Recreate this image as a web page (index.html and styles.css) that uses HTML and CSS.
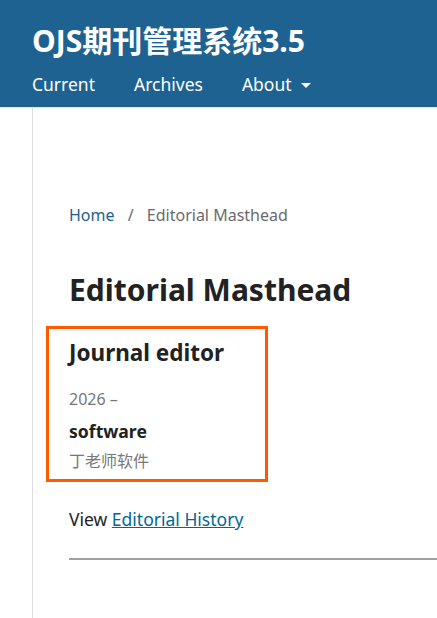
FILE: index.html
```html
<!DOCTYPE html>
<html>
	<head>
		<meta charset="utf-8" />
		<title>Editorial Masthead | OJS期刊管理系统3.5</title>
		<link rel="stylesheet" href="styles.css">
	</head>
	<body>
		<header class="site-head">
			<div class="brand">OJS期刊管理系统3.5</div>
			<nav>
				<ul class="menu">
					<li><a href="#">Current</a></li>
					<li><a href="#">Archives</a></li>
					<li><a href="#" class="dropdown">About</a></li>
				</ul>
			</nav>
		</header>
		<main class="page">
			<div class="breadcrumbs">
				<a href="#">Home</a>
				<span class="sep">/</span>
				<span class="current">Editorial Masthead</span>
			</div>
			<h1>Editorial Masthead</h1>
			<section class="role">
				<h2>Journal editor</h2>
				<div class="since">2026 –</div>
				<div class="person">software</div>
				<div class="affiliation">丁老师软件</div>
			</section>
			<p class="history">View <a href="#">Editorial History</a></p>
			<hr>
		</main>
	</body>
</html>
```

FILE: styles.css
```css
body {
	margin: 0;
	font-family: 'Noto Sans', 'Noto Sans CJK SC', sans-serif;
	color: #222;
	background: #fff;
	overflow: hidden;
}
a {
	color: #1e6292;
	text-decoration: none;
}

/* header */
.site-head {
	background: #1e6292;
	height: 107px;
	padding: 0 32px;
	border-bottom: 1px solid #e4e8ec;
	box-sizing: content-box;
}
.brand {
	padding-top: 23px;
	font-size: 30px;
	font-weight: bold;
	line-height: 36px;
	color: #fff;
}
.menu {
	display: flex;
	gap: 39px;
	list-style: none;
	margin: 13px 0 0;
	padding: 0;
	font-size: 17.5px;
	line-height: 24px;
}
.menu a {
	color: #fff;
}
.dropdown::after {
	content: '';
	display: inline-block;
	margin-left: 9px;
	vertical-align: 3px;
	border-top: 5px solid #fff;
	border-left: 5px solid transparent;
	border-right: 5px solid transparent;
}

/* content */
.page {
	margin-left: 32px;
	border-left: 1px solid #ddd;
	padding-left: 36px;
	min-height: 520px;
	overflow: hidden;
}
.breadcrumbs {
	margin-top: 95px;
	font-size: 16px;
	line-height: 24px;
	color: #6b6b6b;
}
.breadcrumbs .sep {
	margin: 0 9px;
}
h1 {
	margin: 43px 0 0;
	font-size: 30px;
	line-height: 40px;
}
.role {
	margin: 16px 0 0 -23px;
	width: 176px;
	padding: 10px 20px 6px;
	border: 3px solid #ff5a00;
}
.role h2 {
	margin: 0;
	font-size: 22.5px;
	line-height: 28px;
}
.since {
	margin-top: 20px;
	font-size: 16px;
	line-height: 24px;
	color: #777;
}
.person {
	margin-top: 8px;
	font-size: 17.6px;
	font-weight: bold;
	line-height: 24px;
}
.affiliation {
	margin-top: 6px;
	font-size: 16px;
	line-height: 24px;
	color: #777;
}
.history {
	margin: 25px 0 0;
	font-size: 17.5px;
	line-height: 24px;
}
.history a {
	color: #006798;
	text-decoration: underline;
}
hr {
	margin: 27px 0 0;
	border: 0;
	border-top: 2px solid #a0a0a0;
}
```
